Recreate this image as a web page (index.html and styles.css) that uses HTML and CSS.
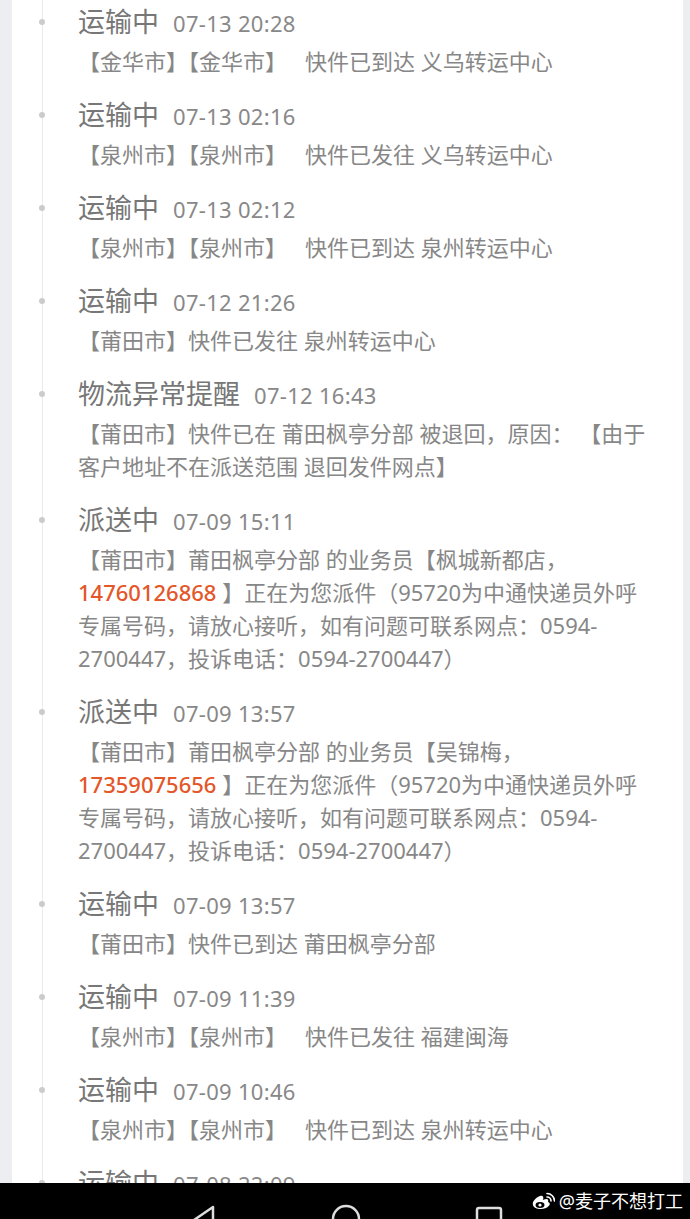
FILE: index.html
```html
<!DOCTYPE html>
<html lang="zh-CN">
<head>
    <meta charset="UTF-8">
    <title>物流详情</title>
    <link rel="stylesheet" href="styles.css">
</head>
<body>
<div id="page">
    <ul class="track">
        <li class="item">
            <div class="head"><span class="state">运输中</span><span class="time">07-13 20:28</span></div>
            <p class="desc">【金华市】【金华市】<i class="gap"></i>快件已到达 义乌转运中心</p>
        </li>
        <li class="item">
            <div class="head"><span class="state">运输中</span><span class="time">07-13 02:16</span></div>
            <p class="desc">【泉州市】【泉州市】<i class="gap"></i>快件已发往 义乌转运中心</p>
        </li>
        <li class="item">
            <div class="head"><span class="state">运输中</span><span class="time">07-13 02:12</span></div>
            <p class="desc">【泉州市】【泉州市】<i class="gap"></i>快件已到达 泉州转运中心</p>
        </li>
        <li class="item">
            <div class="head"><span class="state">运输中</span><span class="time">07-12 21:26</span></div>
            <p class="desc">【莆田市】快件已发往 泉州转运中心</p>
        </li>
        <li class="item">
            <div class="head"><span class="state">物流异常提醒</span><span class="time">07-12 16:43</span></div>
            <p class="desc">【莆田市】快件已在 莆田枫亭分部 被退回，原因： 【由于<br>客户地址不在派送范围 退回发件网点】</p>
        </li>
        <li class="item">
            <div class="head"><span class="state">派送中</span><span class="time">07-09 15:11</span></div>
            <p class="desc">【莆田市】莆田枫亭分部 的业务员【枫城新都店，<br><a class="phone" href="javascript:;">14760126868</a> 】正在为您派件（95720为中通快递员外呼<br>专属号码，请放心接听，如有问题可联系网点：0594-<br>2700447，投诉电话：0594-2700447）</p>
        </li>
        <li class="item">
            <div class="head"><span class="state">派送中</span><span class="time">07-09 13:57</span></div>
            <p class="desc">【莆田市】莆田枫亭分部 的业务员【吴锦梅，<br><a class="phone" href="javascript:;">17359075656</a> 】正在为您派件（95720为中通快递员外呼<br>专属号码，请放心接听，如有问题可联系网点：0594-<br>2700447，投诉电话：0594-2700447）</p>
        </li>
        <li class="item">
            <div class="head"><span class="state">运输中</span><span class="time">07-09 13:57</span></div>
            <p class="desc">【莆田市】快件已到达 莆田枫亭分部</p>
        </li>
        <li class="item">
            <div class="head"><span class="state">运输中</span><span class="time">07-09 11:39</span></div>
            <p class="desc">【泉州市】【泉州市】<i class="gap"></i>快件已发往 福建闽海</p>
        </li>
        <li class="item">
            <div class="head"><span class="state">运输中</span><span class="time">07-09 10:46</span></div>
            <p class="desc">【泉州市】【泉州市】<i class="gap"></i>快件已到达 泉州转运中心</p>
        </li>
        <li class="item">
            <div class="head"><span class="state">运输中</span><span class="time">07-08 22:09</span></div>
            <p class="desc">【泉州市】【泉州市】<i class="gap"></i>快件已发往 泉州转运中心</p>
        </li>
    </ul>
</div>
<div id="navbar">
    <svg class="nav-btn" width="26" height="30" viewBox="0 0 26 30">
        <path d="M22 2 L3 15 L22 28 Z" fill="none" stroke="#ddd" stroke-width="2.5" stroke-linejoin="round"/>
    </svg>
    <svg class="nav-btn" width="30" height="30" viewBox="0 0 30 30">
        <circle cx="15" cy="15" r="13" fill="none" stroke="#ddd" stroke-width="2.5"/>
    </svg>
    <svg class="nav-btn nav-square" width="28" height="30" viewBox="0 0 28 30">
        <rect x="2" y="2" width="24" height="24" rx="2" fill="none" stroke="#ddd" stroke-width="2.5"/>
    </svg>
    <div class="mark">
        <svg width="24" height="18" viewBox="0 0 24 18">
            <path d="M9 4 C4 6 1 10 2 13 C3 17 10 18 15 16 C19 14 20 11 17 10 C18 7 16 6 12 8 C13 5 12 3 9 4 Z" fill="#fff"/>
            <ellipse cx="9" cy="13" rx="4.5" ry="3" fill="#000"/>
            <circle cx="9" cy="13" r="1.6" fill="#fff"/>
            <path d="M16 5 A4 4 0 0 1 20 9" fill="none" stroke="#fff" stroke-width="1.6" stroke-linecap="round"/>
            <path d="M16 1.5 A7.5 7.5 0 0 1 23.5 9" fill="none" stroke="#fff" stroke-width="1.6" stroke-linecap="round"/>
        </svg>
        <span>@麦子不想打工</span>
    </div>
</div>
</body>
</html>
```

FILE: styles.css
```css
* {
    margin: 0;
    padding: 0;
}

body {
    background-color: #eceef1;
    font-family: "Noto Sans", "Noto Sans CJK SC", sans-serif;
    height: 1219px;
    overflow: hidden;
}

#page {
    margin: 0 7px 0 12px;
    height: 1219px;
    background-color: #fff;
    overflow: hidden;
}

.track {
    list-style: none;
    margin-left: 30px;
    padding: 4px 25px 0 35px;
    border-left: 1px solid #eaeaea;
    min-height: 1300px;
}

.item {
    position: relative;
    padding-bottom: 19px;
}

.item::before {
    content: "";
    position: absolute;
    left: -39px;
    top: 15px;
    width: 6px;
    height: 6px;
    border-radius: 50%;
    background-color: #ccc;
}

.head {
    height: 35px;
    line-height: 35px;
    white-space: nowrap;
}

.state {
    font-size: 27px;
    color: #777;
}

.time {
    font-size: 22px;
    color: #888;
    margin-left: 14px;
    letter-spacing: 0.3px;
}

.desc {
    margin-top: 6px;
    font-size: 22px;
    line-height: 33px;
    color: #878787;
    white-space: nowrap;
}

.gap {
    display: inline-block;
    width: 18px;
}

.phone {
    color: #e4572a;
    font-weight: 500;
    text-decoration: none;
}

#navbar {
    position: fixed;
    left: 0;
    right: 0;
    bottom: 0;
    height: 36px;
    background-color: #000;
    overflow: hidden;
}

.nav-btn {
    position: absolute;
    top: 22px;
}

.nav-btn:nth-child(1) {
    left: 191px;
}

.nav-btn:nth-child(2) {
    left: 331px;
    top: 21px;
}

.nav-square {
    left: 475px;
    top: 23px;
}

.mark {
    position: absolute;
    right: 7px;
    top: 7px;
    display: flex;
    align-items: center;
    gap: 4px;
    color: #fff;
    font-size: 18px;
    line-height: 22px;
}
```
